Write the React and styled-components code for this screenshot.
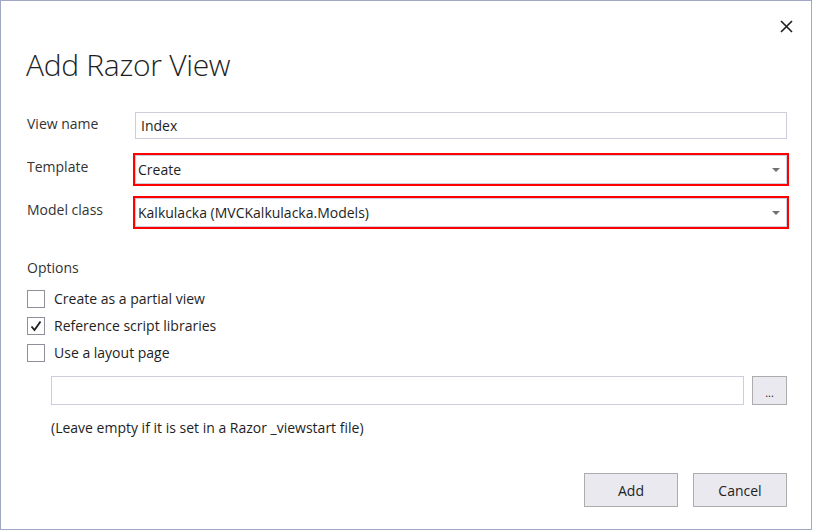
import React, { useState } from 'react';
import styled, { createGlobalStyle } from 'styled-components';

const GlobalStyle = createGlobalStyle`
  body {
    margin: 0;
    background: #ffffff;
    font-family: "Open Sans", "Noto Sans", sans-serif;
  }
`

const Dialog = styled.div`
  box-sizing: border-box;
  width: 812px;
  height: 530px;
  border: 1px solid #a3a7c7;
  background: #ffffff;
  color: #1e1e1e;
  display: flex;
  flex-direction: column;
`

const TopBar = styled.div`
  display: flex;
  justify-content: flex-end;
  padding: 17px 17px 0 0;
  height: 18px;
`

const Close = styled.button`
  border: none;
  background: none;
  padding: 0;
  width: 16px;
  height: 16px;
  cursor: pointer;
  display: flex;
  align-items: center;
  justify-content: center;
`

const Body = styled.div`
  padding: 0 24px 0 26px;
  display: flex;
  flex-direction: column;
  flex: 1;
`

const Title = styled.h1`
  margin: 9px 0 0 -1px;
  font-size: 30px;
  font-weight: 300;
  line-height: 40px;
  color: #1e1e1e;
  letter-spacing: -0.3px;
`

const Form = styled.div`
  display: grid;
  grid-template-columns: 108px 1fr;
  align-items: center;
  margin-top: 27px;
`

const Label = styled.label`
  font-size: 14px;
  color: #333333;
  align-self: start;
  padding-top: ${p => p.$top || 2}px;
  margin-top: ${p => p.$gap || 0}px;
`

const TextBox = styled.input`
  box-sizing: border-box;
  width: 100%;
  height: ${p => p.$h || 27}px;
  border: 1px solid #cccedb;
  padding: 0 5px;
  font-family: inherit;
  font-size: 14px;
  color: #1e1e1e;
  outline: none;
  background: #ffffff;
`

const Highlight = styled.div`
  margin: ${p => p.$gap || 0}px -2px 0;
  border: 2px solid #ff0000;
`

const Combo = styled.div`
  box-sizing: border-box;
  height: 29px;
  border: 1px solid #cccedb;
  display: flex;
  align-items: center;
  justify-content: space-between;
  padding: 0 6px 0 2px;
  font-size: 14px;
  color: #1e1e1e;
`

const Caret = styled.span`
  width: 0;
  height: 0;
  border-left: 4px solid transparent;
  border-right: 4px solid transparent;
  border-top: 4px solid #717171;
`

const Section = styled.div`
  margin-top: 29px;
  display: flex;
  flex-direction: column;
`

const SectionTitle = styled.div`
  font-size: 14px;
  color: #333333;
  margin-bottom: 8px;
`

const CheckRow = styled.label`
  display: flex;
  align-items: center;
  gap: 9px;
  height: 27px;
  font-size: 14px;
  color: #1e1e1e;
  cursor: pointer;
`

const Box = styled.span`
  box-sizing: border-box;
  width: 18px;
  height: 18px;
  border: 1px solid #8e8f9a;
  background: #ffffff;
  display: flex;
  align-items: center;
  justify-content: center;
`

const LayoutRow = styled.div`
  display: flex;
  gap: 8px;
  margin: 10px 0 0 24px;
`

const Browse = styled.button`
  box-sizing: border-box;
  width: 37px;
  height: 29px;
  border: 1px solid #acacac;
  background: #e9e9ef;
  font-family: inherit;
  font-size: 11px;
  color: #1e1e1e;
  padding: 4px 0 0;
`

const Hint = styled.div`
  margin: 13px 0 0 24px;
  font-size: 14px;
  color: #1e1e1e;
`

const Footer = styled.div`
  margin-top: auto;
  margin-bottom: 22px;
  display: flex;
  justify-content: flex-end;
  gap: 15px;
`

const Button = styled.button`
  box-sizing: border-box;
  width: 94px;
  height: 34px;
  border: 1px solid #acacac;
  background: #e9e9ef;
  font-family: inherit;
  font-size: 14px;
  color: #1e1e1e;
`

const Check = ({ checked, onChange, children }) => (
  <CheckRow onClick={onChange}>
    <Box>
      {checked && (
        <svg width="12" height="12" viewBox="0 0 12 12">
          <path d="M1.5 6.5 L4.5 10 L10.5 1.5" fill="none" stroke="#1e1e1e" strokeWidth="1.8" />
        </svg>
      )}
    </Box>
    {children}
  </CheckRow>
)

const App = () => {
  const [opts, setOpts] = useState({ partial: false, scripts: true, layout: false })
  const toggle = key => () => setOpts({ ...opts, [key]: !opts[key] })

  return (
    <>
      <GlobalStyle />
      <Dialog>
        <TopBar>
          <Close aria-label="Close">
            <svg width="13" height="13" viewBox="0 0 13 13">
              <path d="M1 1 L12 12 M12 1 L1 12" stroke="#1e1e1e" strokeWidth="1.6" />
            </svg>
          </Close>
        </TopBar>
        <Body>
          <Title>Add Razor View</Title>
          <Form>
            <Label $top={2}>View name</Label>
            <TextBox defaultValue="Index" />
            <Label $top={4} $gap={14}>Template</Label>
            <Highlight $gap={14}>
              <Combo>Create<Caret /></Combo>
            </Highlight>
            <Label $top={4} $gap={10}>Model class</Label>
            <Highlight $gap={10}>
              <Combo>Kalkulacka (MVCKalkulacka.Models)<Caret /></Combo>
            </Highlight>
          </Form>
          <Section>
            <SectionTitle>Options</SectionTitle>
            <Check checked={opts.partial} onChange={toggle('partial')}>Create as a partial view</Check>
            <Check checked={opts.scripts} onChange={toggle('scripts')}>Reference script libraries</Check>
            <Check checked={opts.layout} onChange={toggle('layout')}>Use a layout page</Check>
            <LayoutRow>
              <TextBox $h={29} />
              <Browse>...</Browse>
            </LayoutRow>
            <Hint>(Leave empty if it is set in a Razor _viewstart file)</Hint>
          </Section>
          <Footer>
            <Button>Add</Button>
            <Button>Cancel</Button>
          </Footer>
        </Body>
      </Dialog>
    </>
  )
}

export default App;
